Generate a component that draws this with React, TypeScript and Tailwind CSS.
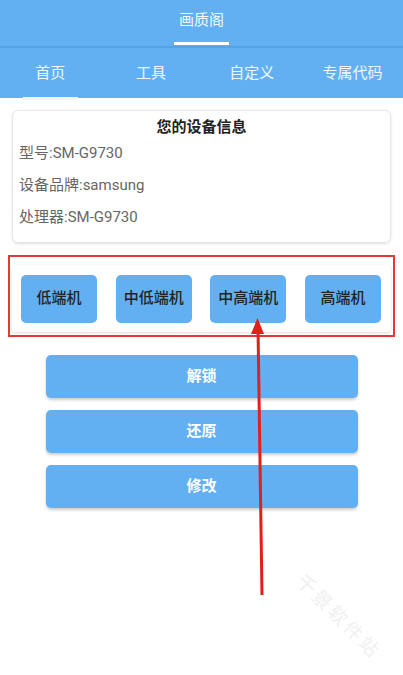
const tabs = ["首页", "工具", "自定义", "专属代码"];
const levels = ["低端机", "中低端机", "中高端机", "高端机"];
const actions = ["解锁", "还原", "修改"];

export default function App() {
  return (
    <div className="relative w-[403px] h-[675px] overflow-hidden bg-white font-['Roboto','Noto_Sans_CJK_SC',sans-serif]">
      {/* Header */}
      <div className="bg-[#62b0f1]">
        <div className="flex h-[46px] flex-col items-center">
          <span className="pt-[9px] text-[15px] leading-[22px] text-white/95">画质阁</span>
          <div className="mt-auto mb-[1px] h-[3px] w-[55px] bg-white" />
        </div>
        <div className="h-[2px] bg-[#56a2e2]" />
        <div className="grid h-[50px] grid-cols-4">
          {tabs.map((t, i) => (
            <div key={t} className="relative flex items-center justify-center">
              <span className="text-[15px] text-white/90">{t}</span>
              {i === 0 && (
                <div className="absolute bottom-[-2px] left-[23px] h-[3px] w-[55px] bg-[#eef6fd]" />
              )}
            </div>
          ))}
        </div>
      </div>

      {/* Device info card */}
      <div className="mx-[12px] mt-[12px] h-[133px] rounded-md border border-gray-200 px-[6px] pt-[5px] shadow-sm">
        <div className="text-center text-[15px] font-bold leading-[22px] text-[#222]">您的设备信息</div>
        <div className="mt-[4px] flex flex-col gap-[10px] text-[15px] leading-[22px] text-[#666]">
          <span>型号:SM-G9730</span>
          <span>设备品牌:samsung</span>
          <span>处理器:SM-G9730</span>
        </div>
      </div>

      {/* Level selection */}
      <div className="mx-[8px] mt-[12px] h-[82px] border-2 border-[#e53935] pt-[8px] pl-[2px] pr-[2px]">
        <div className="flex h-[67px] items-center justify-between rounded-sm bg-white pl-[9px] pr-[10px] shadow-[0_1px_3px_rgba(0,0,0,0.15)]">
          {levels.map((l) => (
            <div
              key={l}
              className="flex h-[48px] w-[76px] items-center justify-center rounded-[5px] bg-[#62b0f1] text-[15px] font-medium text-[#222]"
            >
              {l}
            </div>
          ))}
        </div>
      </div>

      {/* Actions */}
      <div className="mt-[18px] flex flex-col items-center gap-[12px]">
        {actions.map((a) => (
          <div
            key={a}
            className="flex h-[43px] w-[312px] items-center justify-center rounded-[5px] bg-[#62b0f1] text-[15px] font-bold text-white shadow-[0_2px_3px_rgba(0,0,0,0.2)]"
          >
            {a}
          </div>
        ))}
      </div>

      {/* Annotation arrow */}
      <svg className="pointer-events-none absolute left-0 top-0" width="403" height="675">
        <line x1="262" y1="595" x2="258" y2="328" stroke="#e0211b" strokeWidth="3" />
        <polygon points="257.5,318 251,334 264,334" fill="#e0211b" />
      </svg>

      {/* Watermark */}
      <div className="pointer-events-none absolute left-[283px] top-[603px] rotate-45 text-[19px] tracking-[3px] text-[#f0f0f0]">
        千景软件站
      </div>
    </div>
  );
}
